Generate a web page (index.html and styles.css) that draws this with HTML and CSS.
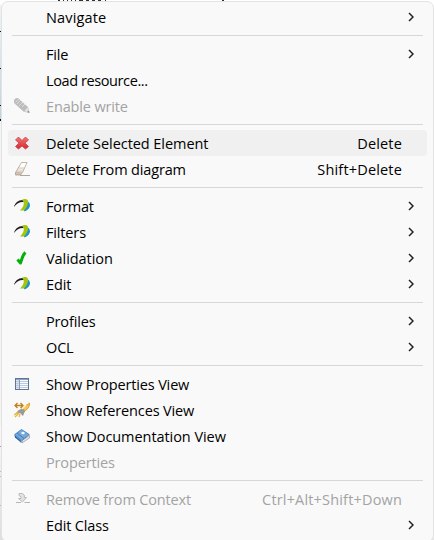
FILE: index.html
```
<!DOCTYPE html>
<html lang="en">
<head>
<meta charset="utf-8">
<title>Context menu</title>
<link rel="stylesheet" href="styles.css">
</head>
<body>
<svg class="canvas" width="434" height="540" shape-rendering="crispEdges">
  <defs><linearGradient id="node" x2="0" y2="1"><stop offset="0" stop-color="#eef5f8"/><stop offset="1" stop-color="#bdd3df"/></linearGradient>
  <linearGradient id="shade" x2="0" y2="1"><stop offset="0" stop-color="#f8f8f8"/><stop offset="1" stop-color="#dedede"/></linearGradient></defs>
  <path fill="url(#node)" d="M0 5h3v115H0z"/>
  <path fill="#111" d="M0 31h1v1H0zM0 68h1v1H0zM0 105h1v1H0zM0 119h1v2H0z"/>
  <path fill="#f3f3f3" d="M0 121h3v305H0z"/><path fill="url(#shade)" d="M0 426h8v114H0z"/>
  <path fill="#999" d="M0 446h1v1H0z"/><path fill="#bbb" d="M0 471h1v1H0zM0 476h1v1H0zM0 505h1v1H0z"/>
  <path fill="#333" d="M58 0h2v1h-2zM63 0h1v1h-1zM67 0h1v1h-1zM71 0h1v1h-1zM75 0h1v1h-1zM79 0h4v1h-4zM86 0h3v1h-3zM92 0h3v1h-3zM98 0h3v1h-3zM105 0h1v1h-1zM222 0h2v1h-2z"/>
  <path fill="#e7e7e7" d="M426 532h8v8h-8z"/>
</svg>
<svg class="defs" width="0" height="0">
  <defs>
    <linearGradient id="red" x2="0" y2="1"><stop offset="0" stop-color="#f27676"/><stop offset="1" stop-color="#d9262e"/></linearGradient>
    <linearGradient id="tan" x2="0" y2="1"><stop offset=".35" stop-color="#fff"/><stop offset="1" stop-color="#c9b9a6"/></linearGradient>
    <symbol id="chevron" viewBox="0 0 6 10"><path d="M1 1l4 4-4 4" fill="none" stroke="#222" stroke-width="1.5"/></symbol>
    <symbol id="swoosh" viewBox="0 0 16 16"><path d="M0 9C1 4.500 5 1.300 10 2v2C6 3.500 3 5 0 9z" fill="#1c1c22"/><path d="M13 3c4.500 2 4 8-2.500 10.500L9.500 11z" fill="#1f93c4"/><path d="M8 1.800C10 .6 13.500.8 14 3c.5 3.500-1.500 7.500-4.500 9.500H6C8.500 10 10.500 7 9.500 4z" fill="#a3c410"/></symbol>
  </defs>
</svg>
<nav class="menu">
  <div class="item"><span class="icon"></span><span class="label wide">Navigate</span><svg class="arrow"><use href="#chevron"/></svg></div>
  <hr>
  <div class="item"><span class="icon"></span><span class="label">File</span><svg class="arrow"><use href="#chevron"/></svg></div>
  <div class="item"><span class="icon"></span><span class="label tight">Load resource...</span></div>
  <div class="item disabled"><svg class="icon" viewBox="0 0 16 16"><path d="M0 3q0-3 4-3l10 9 1.500 6-6-1.500L0 5z" fill="#bdbdbd"/><path d="M3 6l4-4M5 8l4-4M1.500 4.500L5 1" stroke="#eee" fill="none" stroke-width=".6"/><path d="M8 9l3-3" stroke="#ddd"/><path d="M10.500 13l3-3.500 1 3-2 1.500z" fill="#e4e4e4"/><path d="M13 14l2-1.500.5 2.500z" fill="#999"/></svg><span class="label">Enable write</span></div>
  <hr>
  <div class="item selected"><svg class="icon" viewBox="0 0 16 16"><path d="M4.500 2L8 5.500 11.500 2l3 3L11 8l3.500 3.500-3 2.500L8 11l-3.500 3-3-2.500L5 8 1.500 5z" fill="url(#red)" stroke="#c6404a" stroke-width=".8" stroke-linejoin="round"/></svg><span class="label roomy">Delete Selected Element</span><span class="key">Delete</span></div>
  <div class="item"><svg class="icon" viewBox="0 0 16 16"><path d="M7.500 1.500H13L9 10.500l-2.500 3.500h-5v-2.500z" fill="url(#tan)" stroke="#a79681" stroke-width=".7"/><path d="M4.500 7H10M1.500 11.500h5" fill="none" stroke="#b5a58f" stroke-width=".5"/><path d="M6 14.500h10" stroke="#a79b8c" stroke-width=".9"/></svg><span class="label">Delete From diagram</span><span class="key">Shift+Delete</span></div>
  <hr>
  <div class="item"><svg class="icon"><use href="#swoosh"/></svg><span class="label">Format</span><svg class="arrow"><use href="#chevron"/></svg></div>
  <div class="item"><svg class="icon"><use href="#swoosh"/></svg><span class="label">Filters</span><svg class="arrow"><use href="#chevron"/></svg></div>
  <div class="item"><svg class="icon" viewBox="0 0 16 16"><path d="M3.500 9.500l3 3.500L8 8.500q1.500-4.500 3.500-6" fill="none" stroke="#05b00b" stroke-width="3" stroke-linejoin="round"/></svg><span class="label roomy">Validation</span><svg class="arrow"><use href="#chevron"/></svg></div>
  <div class="item"><svg class="icon"><use href="#swoosh"/></svg><span class="label">Edit</span><svg class="arrow"><use href="#chevron"/></svg></div>
  <hr>
  <div class="item"><span class="icon"></span><span class="label">Profiles</span><svg class="arrow"><use href="#chevron"/></svg></div>
  <div class="item"><span class="icon"></span><span class="label">OCL</span><svg class="arrow"><use href="#chevron"/></svg></div>
  <hr>
  <div class="item"><svg class="icon" viewBox="0 0 16 16" shape-rendering="crispEdges"><path d="M1 2h14v12H1z" fill="#5f7497"/><path d="M2 4h12v9H2z" fill="#f7faff"/><path d="M2 4h3v9H2z" fill="#d8e3f0"/><path d="M2 5h12v1H2zM2 7h12v1H2zM2 9h12v1H2zM2 11h12v1H2z" fill="#bcc9de"/><path d="M5 4h1v9H5z" fill="#8c9dbd"/><path d="M2 3h12v1H2z" fill="#8ea2c5"/></svg><span class="label">Show Properties View</span></div>
  <div class="item"><svg class="icon" viewBox="0 0 16 16"><path d="M5 10q4-6 11-9 0 5-6 9z" fill="#f5c84c" stroke="#d39b36" stroke-width=".8"/><path d="M4 8.500L9 6l2 3-2 5-3-3-4 1z" fill="#9b98a0"/><path d="M8 7l4-4" stroke="#fff4b5" stroke-width="1.500"/><path d="M1 3.500h8M3.500 1L1 3.500 3.500 6M6.500 1L9 3.500 6.500 6" fill="none" stroke="#bd801d" stroke-width="1.300"/><path d="M0 13l4-3M1 15l4-4M5 15l1-3" stroke="#e5b62c" stroke-width="1.200"/></svg><span class="label">Show References View</span></div>
  <div class="item"><svg class="icon" viewBox="0 0 16 16"><path d="M.3 6.500L7.500 13v2L1 9.500z" fill="#2f66aa"/><path d="M8 12.500l7.500-5V10L8 15z" fill="#e2e2e2" stroke="#8a8e94" stroke-width=".6"/><path d="M.7 6.500L7.500 1.500l7.800 5-7.500 6z" fill="#75a9de" stroke="#3e75b7" stroke-width=".8"/><path d="M3 5l7 5.500" stroke="#4079bc"/><ellipse cx="9" cy="5" rx="1.700" ry="1.200" fill="#f5fbff"/></svg><span class="label roomy">Show Documentation View</span></div>
  <div class="item disabled"><span class="icon"></span><span class="label">Properties</span></div>
  <hr>
  <div class="item disabled"><svg class="icon" viewBox="0 0 16 16"><path d="M5 2.500h3.500q2.500 1 2 4h2L8.500 11 4.500 7.500H7Q8 5.500 5 4.500z" fill="#e2e2e2" stroke="#b0b0b0" stroke-width=".8"/><path d="M2 11.500h5M10.500 11.500H16" stroke="#b5b5b5"/></svg><span class="label">Remove from Context</span><span class="key">Ctrl+Alt+Shift+Down</span></div>
  <div class="item"><span class="icon"></span><span class="label">Edit Class</span><svg class="arrow"><use href="#chevron"/></svg></div>
</nav>
</body>
</html>
```
FILE: styles.css
```
* { box-sizing: border-box; }
body { margin: 0; width: 434px; height: 540px; overflow: hidden; background: #fff; }
.canvas { position: absolute; left: 0; top: 0; z-index: -1; }
.defs { position: absolute; }
.menu {
  margin: 1px 0 0 1px;
  width: 433px;
  height: 541px;
  padding: 2px 6px 0 6px;
  border: 1px solid #e3e3e3;
  border-radius: 7px;
  background: #f9f9f9;
  font: 14.5px/26px "Open Sans", "Noto Sans", sans-serif;
  letter-spacing: -0.15px;
  color: #000;
}
.item { display: flex; align-items: center; height: 26px; padding: 0 11px 0 6px; border-radius: 4px; }
.icon { width: 16px; height: 16px; flex: none; margin-right: 16px; }
.label { flex: 1; padding-top: 2px; line-height: 26px; white-space: nowrap; }
.wide { letter-spacing: 0.15px; }
.roomy { letter-spacing: -0.06px; }
.tight { letter-spacing: -0.4px; }
.key { margin-right: 14px; padding-top: 2px; line-height: 26px; letter-spacing: 0.17px; white-space: nowrap; }
.arrow { width: 6px; height: 10px; margin-right: 2px; }
.selected { background: #f0f0f0; }
.disabled { color: #a3a3a3; }
hr { height: 1px; margin: 5px 4px; border: 0; background: #d7d7d7; }
```
